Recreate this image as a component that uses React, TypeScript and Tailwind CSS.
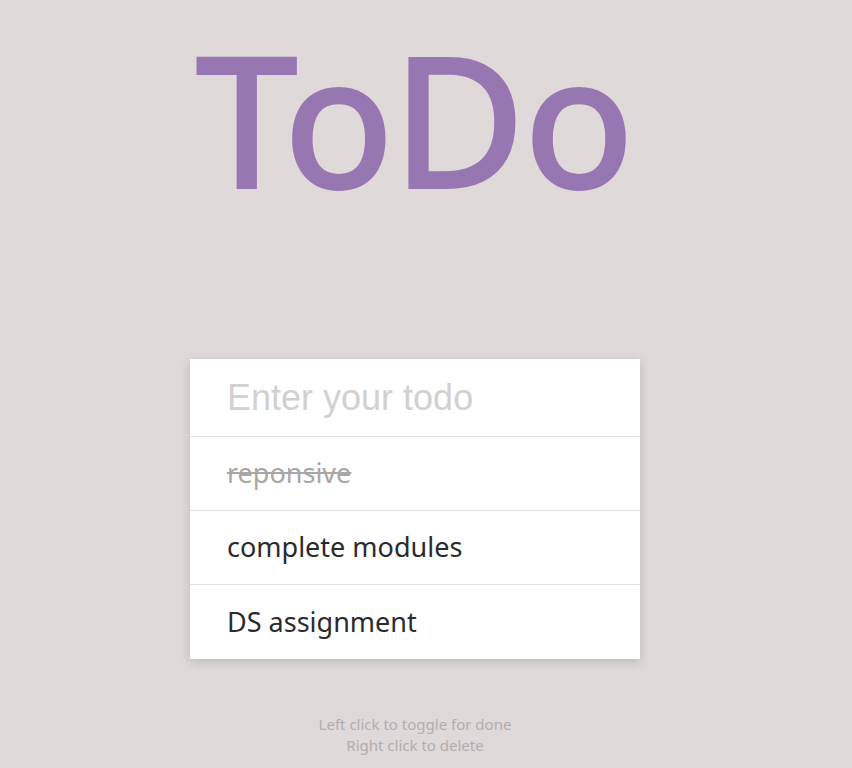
export default function App() {
  const todos = [
    { text: "reponsive", done: true },
    { text: "complete modules", done: false },
    { text: "DS assignment", done: false },
  ];

  return (
    <div className="min-h-[768px] w-full bg-[#dfd9d9] font-['Noto_Sans',sans-serif]">
      <div className="flex w-[830px] flex-col items-center">
        <h1 className="mt-[10px] text-[180px] leading-[1.2] font-normal text-[#9777b2] [-webkit-text-stroke:4px_#9777b2]">
          ToDo
        </h1>
        <div className="mt-[133px] w-[450px] bg-white shadow-[0_3px_10px_rgba(0,0,0,0.15)]">
          <input
            placeholder="Enter your todo"
            className="block h-[78px] w-full border-b border-[#e3e0e0] px-[37px] font-['Liberation_Sans',sans-serif] text-[36px] text-[#333] outline-none placeholder:text-[#d3d0d0]"
          />
          {todos.map((t, i) => (
            <div
              key={t.text}
              className={
                "flex h-[74px] items-center px-[37px] text-[27px] " +
                (i < todos.length - 1 ? "border-b border-[#e3e0e0] " : "") +
                (t.done ? "text-[#a9a6a6] line-through" : "text-[#2b2b2b]")
              }
            >
              {t.text}
            </div>
          ))}
        </div>
        <div className="mt-[55px] text-center text-[15px] leading-[21px] text-[#b3aeae]">
          <p>Left click to toggle for done</p>
          <p>Right click to delete</p>
        </div>
      </div>
    </div>
  );
}
